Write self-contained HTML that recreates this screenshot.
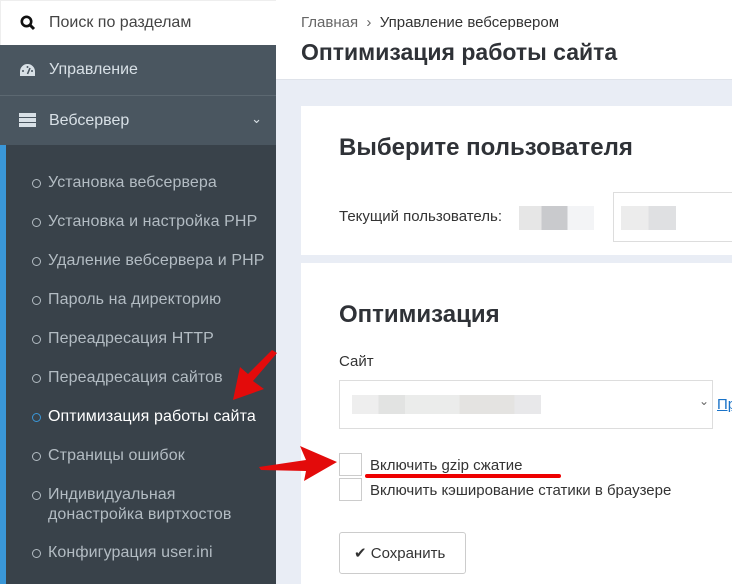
<!DOCTYPE html>
<html><head><meta charset="utf-8"><style>
*{box-sizing:border-box;margin:0;padding:0}
html,body{width:732px;height:584px;overflow:hidden}
body{font-family:"Liberation Sans",sans-serif;background:#e9edf5;position:relative}
.sb{position:absolute;left:0;top:0;width:276px;height:584px;background:#39424a}
.search{height:45px;background:#fff;border-top:1px solid #eee;border-left:1px solid #eee;display:flex;align-items:center;padding-left:19px;font-size:16px;color:#444}
.nav{height:50px;background:#4a5660;color:#d8e0e6;font-size:16px;display:flex;align-items:center;padding-left:49px;position:relative}
.nav+.nav{border-top:1px solid #5c6871}
.sub{position:absolute;left:0;top:145px;width:276px;bottom:0;border-left:6px solid #3a97d8}
.it{position:absolute;left:48px;color:#b3bcc3;font-size:16px;line-height:20px;letter-spacing:0.1px}
.it:before{content:"";position:absolute;left-16px;left:-16px;top:6px;width:7px;height:7px;border:1.5px solid #b3bcc3;border-radius:50%}
.it.a{color:#fff}.it.a:before{border-color:#3a97d8}
.hdr{position:absolute;left:276px;top:0;right:0;height:80px;background:#fff;border-bottom:1px solid #dfe3ea}
.card{position:absolute;left:301px;right:0;background:#fff}
h2{position:absolute;font-size:24px;font-weight:bold;color:#2f3237}
.t{position:absolute;font-size:15px;color:#333}
.blur{position:absolute;height:24px}
.cb{position:absolute;width:23px;height:23px;border:1px solid #ccc;background:#fff}
</style></head><body>
<div class="sb">
<div class="search"><svg width="16" height="16" viewBox="0 0 16 16"><circle cx="6.5" cy="6.5" r="4.7" fill="none" stroke="#111" stroke-width="2.6"/><path d="M10 10l4 4" stroke="#111" stroke-width="3"/></svg><span style="margin-left:13px">Поиск по разделам</span></div>
<div class="nav"><svg style="position:absolute;left:19px;top:18px" width="17" height="14" viewBox="0 0 17 14"><path d="M8.5 1A7.5 7.5 0 0 0 1 8.5V13h15V8.5A7.5 7.5 0 0 0 8.5 1z" fill="#d8e0e6"/><path d="M8.5 11L11 5" stroke="#4a5660" stroke-width="1.6"/><circle cx="4" cy="8" r="1" fill="#4a5660"/><circle cx="8.5" cy="4" r="1" fill="#4a5660"/><circle cx="13" cy="8" r="1" fill="#4a5660"/></svg>Управление</div>
<div class="nav"><svg style="position:absolute;left:19px;top:17px" width="17" height="14" viewBox="0 0 17 14"><rect x="0" y="0" width="17" height="4" fill="#d8e0e6"/><rect x="0" y="5" width="17" height="4" fill="#d8e0e6"/><rect x="0" y="10" width="17" height="4" fill="#d8e0e6"/></svg>Вебсервер<span style="position:absolute;right:14px;top:15px;font-size:13px">&#8964;</span></div>
<div class="sub"></div>
<div class="it" style="top:173px">Установка вебсервера</div>
<div class="it" style="top:212px">Установка и настройка PHP</div>
<div class="it" style="top:251px">Удаление вебсервера и PHP</div>
<div class="it" style="top:290px">Пароль на директорию</div>
<div class="it" style="top:329px">Переадресация HTTP</div>
<div class="it" style="top:368px">Переадресация сайтов</div>
<div class="it a" style="top:407px">Оптимизация работы сайта</div>
<div class="it" style="top:446px">Страницы ошибок</div>
<div class="it" style="top:485px">Индивидуальная<br>донастройка виртхостов</div>
<div class="it" style="top:543px">Конфигурация user.ini</div>
</div>
<div class="hdr">
<div style="position:absolute;left:25px;top:14px;font-size:15px;color:#666">Главная &nbsp;›&nbsp; <span style="color:#333">Управление вебсервером</span></div>
<div style="position:absolute;left:25px;top:39px;font-size:23px;font-weight:bold;color:#2f3237">Оптимизация работы сайта</div>
</div>
<div class="card" style="top:106px;height:149px">
<h2 style="left:38px;top:28px">Выберите пользователя</h2>
<div class="t" style="left:38px;top:102px">Текущий пользователь:</div>
<div class="blur" style="left:218px;top:100px;width:75px;background:linear-gradient(90deg,#e6e6e6 0 30%,#c9cacd 30% 65%,#f3f4f6 65%)"></div>
<div style="position:absolute;left:312px;top:86px;width:130px;height:50px;border:1px solid #ddd;border-right:none"></div>
<div class="blur" style="left:320px;top:100px;width:55px;background:linear-gradient(90deg,#ececec 0 50%,#dfe0e2 50%)"></div>
</div>
<div class="card" style="top:263px;height:321px">
<h2 style="left:38px;top:38px">Оптимизация</h2>
<div class="t" style="left:38px;top:90px">Сайт</div>
<div style="position:absolute;left:38px;top:117px;width:374px;height:49px;border:1px solid #ddd"></div>
<div class="blur" style="left:51px;top:132px;width:189px;height:19px;background:linear-gradient(90deg,#eee 0 14%,#e2e3e2 14% 28%,#ebeceb 28% 57%,#e4e3e1 57% 86%,#e8e8ea 86%)"></div>
<div style="position:absolute;left:398px;top:131px;font-size:12px;color:#666">&#8964;</div>
<div style="position:absolute;left:416px;top:133px;font-size:15px;color:#1a73c8;text-decoration:underline">Пр</div>
<div class="cb" style="left:38px;top:190px"></div>
<div class="cb" style="left:38px;top:215px"></div>
<div class="t" style="left:69px;top:194px">Включить gzip сжатие</div>
<div class="t" style="left:69px;top:219px">Включить кэширование статики в браузере</div>
<div style="position:absolute;left:64px;top:211px;width:196px;height:4px;background:#e00;border-radius:2px"></div>
<div style="position:absolute;left:38px;top:269px;width:127px;height:42px;border:1px solid #ccc;border-radius:3px;font-size:15px;color:#333;padding:11px 0 0 14px">&#10004; Сохранить</div>
</div>
<svg style="position:absolute;left:0;top:0" width="732" height="584">
<path d="M277 353 L253 381 L264 389 L233 400 L240 367 L248 374 L272 350 Z" fill="#e30b0b"/>
<path d="M259 467 L306 460 L300 446 L337 462 L304 481 L306 471 L261 470 Z" fill="#e30b0b"/>
</svg>
</body></html>
